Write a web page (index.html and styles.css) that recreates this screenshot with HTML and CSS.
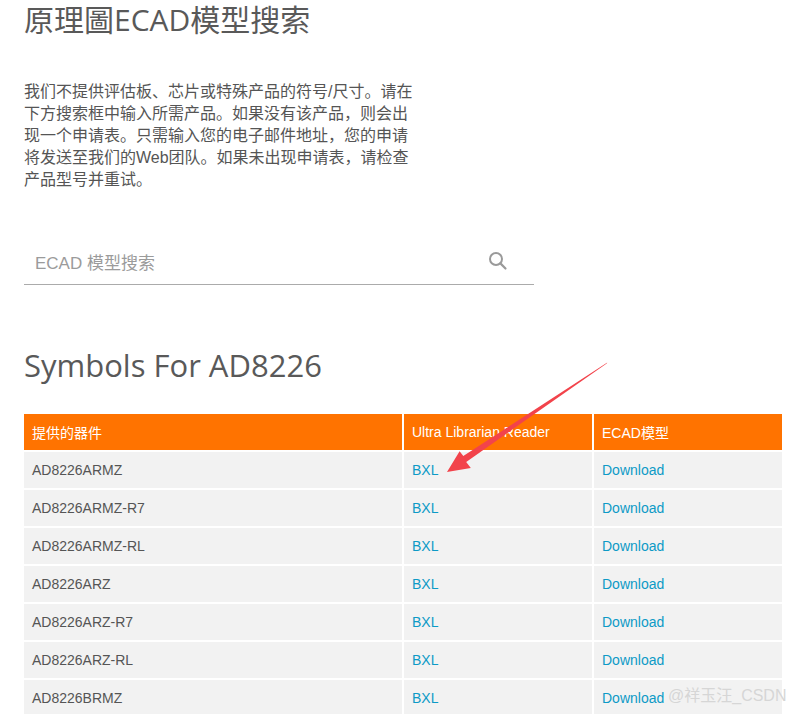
FILE: index.html
```html
<!DOCTYPE html>
<html lang="zh">
<head>
<meta charset="utf-8">
<title>原理圖ECAD模型搜索</title>
<link rel="stylesheet" href="styles.css">
</head>
<body>
<main class="page">
  <h1 class="title">原理圖ECAD模型搜索</h1>
  <p class="intro">我们不提供评估板、芯片或特殊产品的符号/尺寸。请在下方搜索框中输入所需产品。如果没有该产品，则会出现一个申请表。只需输入您的电子邮件地址，您的申请将发送至我们的Web团队。如果未出现申请表，请检查产品型号并重试。</p>
  <div class="search">
    <span class="search-placeholder">ECAD 模型搜索</span>
    <svg class="search-icon" width="20" height="20" viewBox="0 0 20 20" aria-hidden="true">
      <circle cx="8" cy="8" r="6" fill="none" stroke="#9a9a9a" stroke-width="2"/>
      <line x1="12.4" y1="12.4" x2="17.5" y2="17.5" stroke="#9a9a9a" stroke-width="2.2" stroke-linecap="round"/>
    </svg>
  </div>
  <h2 class="heading">Symbols For AD8226</h2>
  <div class="table">
    <div class="row head">
      <div class="cell">提供的器件</div>
      <div class="cell">Ultra Librarian Reader</div>
      <div class="cell">ECAD模型</div>
    </div>
    <div class="row"><div class="cell">AD8226ARMZ</div><div class="cell"><a class="link">BXL</a></div><div class="cell"><a class="link">Download</a></div></div>
    <div class="row"><div class="cell">AD8226ARMZ-R7</div><div class="cell"><a class="link">BXL</a></div><div class="cell"><a class="link">Download</a></div></div>
    <div class="row"><div class="cell">AD8226ARMZ-RL</div><div class="cell"><a class="link">BXL</a></div><div class="cell"><a class="link">Download</a></div></div>
    <div class="row"><div class="cell">AD8226ARZ</div><div class="cell"><a class="link">BXL</a></div><div class="cell"><a class="link">Download</a></div></div>
    <div class="row"><div class="cell">AD8226ARZ-R7</div><div class="cell"><a class="link">BXL</a></div><div class="cell"><a class="link">Download</a></div></div>
    <div class="row"><div class="cell">AD8226ARZ-RL</div><div class="cell"><a class="link">BXL</a></div><div class="cell"><a class="link">Download</a></div></div>
    <div class="row"><div class="cell">AD8226BRMZ</div><div class="cell"><a class="link">BXL</a></div><div class="cell"><a class="link">Download</a></div></div>
  </div>
</main>
<svg class="arrow" width="796" height="714" viewBox="0 0 796 714" aria-hidden="true">
  <polygon fill="#f2434b" points="607.3,362.6 606.7,363.4 466.2,461.9 470.8,467.9 447,472 459.6,451.3 463.3,456.1"/>
</svg>
<div class="watermark">@祥玉汪_CSDN</div>
</body>
</html>
```

FILE: styles.css
```css
html, body {
  margin: 0;
  padding: 0;
  background: #ffffff;
}

body {
  position: relative;
  width: 796px;
  height: 714px;
  overflow: hidden;
  font-family: "Liberation Sans", "Noto Sans CJK SC", sans-serif;
  color: #555555;
}

.page {
  padding: 2px 14px 0 24px;
}

.title {
  margin: 0;
  font-family: "Open Sans", "Noto Sans CJK SC", sans-serif;
  font-weight: 400;
  font-size: 30px;
  line-height: 35px;
  color: #595959;
}

.intro {
  margin: 44px 0 0 0;
  width: 392px;
  font-size: 16px;
  line-height: 22px;
  color: #555555;
}

.search {
  margin-top: 47px;
  width: 510px;
  height: 47px;
  box-sizing: border-box;
  border-bottom: 1px solid #ababab;
  display: flex;
  align-items: center;
  justify-content: space-between;
  padding: 0 26px 0 11px;
}

.search-placeholder {
  font-size: 17px;
  color: #9b9b9b;
}

.search-icon {
  display: block;
}

.heading {
  margin: 60px 0 0 0;
  font-family: "Open Sans", sans-serif;
  font-weight: 400;
  font-size: 31px;
  line-height: 40px;
  color: #595959;
}

.table {
  margin-top: 29px;
  display: flex;
  flex-direction: column;
  gap: 2px;
}

.row {
  display: grid;
  grid-template-columns: 378px 188px 188px;
  gap: 2px;
}

.cell {
  height: 36px;
  box-sizing: border-box;
  padding-left: 8px;
  display: flex;
  align-items: center;
  font-size: 14px;
  background: #f2f2f2;
  color: #555555;
}

.head .cell {
  background: #ff7300;
  color: #ffffff;
}

.link {
  color: #0d9ac6;
  text-decoration: none;
}

.arrow {
  position: absolute;
  left: 0;
  top: 0;
  pointer-events: none;
}

.watermark {
  position: absolute;
  left: 668px;
  top: 686px;
  font-size: 16px;
  line-height: 20px;
  color: #d6d6d6;
}
```
